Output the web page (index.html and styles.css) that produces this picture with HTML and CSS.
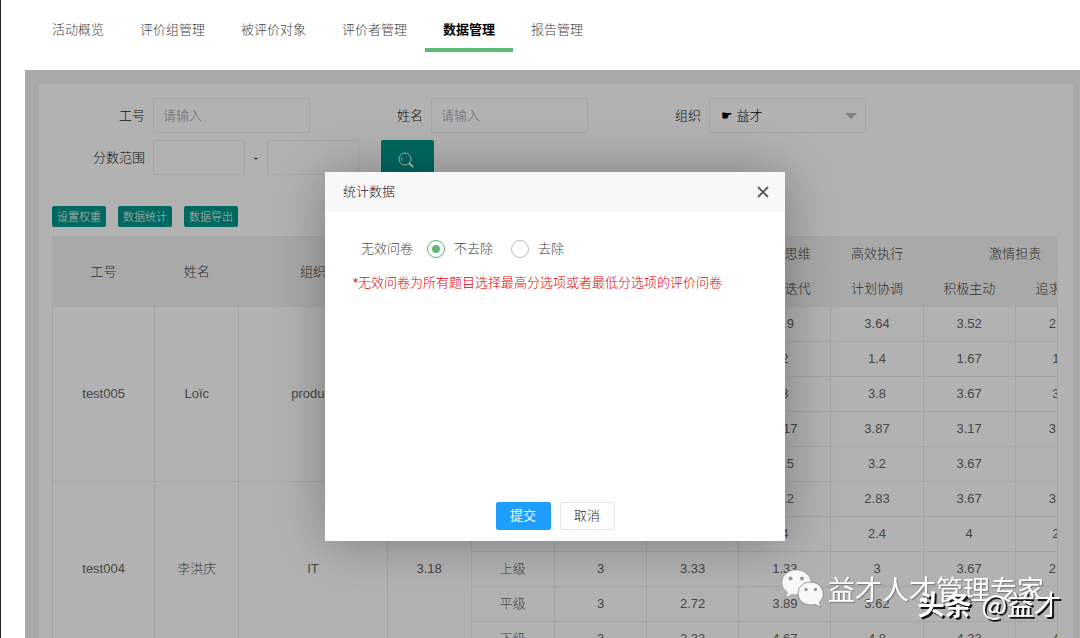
FILE: index.html
```html
<!DOCTYPE html>
<html lang="zh-CN">
<head>
<meta charset="utf-8">
<title>数据管理</title>
<link rel="stylesheet" href="styles.css">
</head>
<body>
<nav class="tabs">
  <a class="tab" href="#">活动概览</a>
  <a class="tab" href="#">评价组管理</a>
  <a class="tab" href="#">被评价对象</a>
  <a class="tab" href="#">评价者管理</a>
  <a class="tab tab-active" href="#">数据管理</a>
  <a class="tab" href="#">报告管理</a>
</nav>

<main class="stage">
  <section class="panel">
    <form class="filters">
      <div class="filter-row">
        <div class="field"><label class="field-label" for="job">工号</label><input class="box box-wide" id="job" type="text" placeholder="请输入"></div>
        <div class="field"><label class="field-label" for="name">姓名</label><input class="box box-wide" id="name" type="text" placeholder="请输入"></div>
        <div class="field"><label class="field-label" for="org">组织</label>
          <div class="select-wrap"><select class="box box-wide select" id="org"><option>☛ 益才</option></select></div>
        </div>
      </div>
      <div class="filter-row">
        <div class="field field-range">
          <label class="field-label" for="min">分数范围</label>
          <input class="box box-short" id="min" type="text">
          <span class="dash">-</span>
          <input class="box box-short" type="text" aria-label="最高分">
        </div>
        <button class="search" type="button" aria-label="搜索">
          <svg width="18" height="18" viewBox="0 0 18 18" fill="none" stroke="currentColor"><circle cx="8" cy="8" r="6"/><path d="M5 10a3.5 3.5 0 0 1 0-4" stroke-width="0.8"/><path d="M12.5 12.5l3 3" stroke-width="2" stroke-linecap="round"/></svg>
        </button>
      </div>
    </form>

    <div class="actions">
      <button class="action" type="button">设置权重</button>
      <button class="action" type="button">数据统计</button>
      <button class="action" type="button">数据导出</button>
    </div>

    <div class="table-wrap">
      <table class="grid">
        <colgroup>
          <col class="c-id"><col class="c-s"><col class="c-org"><col class="c-s"><col class="c-rel">
          <col class="c-m"><col class="c-m"><col class="c-m"><col class="c-m"><col class="c-m"><col class="c-m">
        </colgroup>
        <thead>
          <tr><th rowspan="2">工号</th><th rowspan="2">姓名</th><th rowspan="2">组织</th><th rowspan="2"></th><th rowspan="2"></th><th rowspan="2"></th><th></th><th>创新思维</th><th>高效执行</th><th colspan="2">激情担责</th></tr>
          <tr><th></th><th>快速迭代</th><th>计划协调</th><th>积极主动</th><th>追求卓越</th></tr>
        </thead>
        <tbody>
          <tr><td rowspan="5">test005</td><td rowspan="5">Loïc</td><td rowspan="5">product</td><td rowspan="5"></td><td></td><td></td><td></td><td>3.9</td><td>3.64</td><td>3.52</td><td>2.88</td></tr>
          <tr><td></td><td></td><td></td><td>2</td><td>1.4</td><td>1.67</td><td>1.5</td></tr>
          <tr><td></td><td></td><td></td><td>3</td><td>3.8</td><td>3.67</td><td>3.5</td></tr>
          <tr><td></td><td></td><td></td><td>3.17</td><td>3.87</td><td>3.17</td><td>3.33</td></tr>
          <tr><td></td><td></td><td></td><td>3.5</td><td>3.2</td><td>3.67</td><td></td></tr>
          <tr><td rowspan="5">test004</td><td rowspan="5">李洪庆</td><td rowspan="5">IT</td><td rowspan="5">3.18</td><td></td><td></td><td></td><td>3.2</td><td>2.83</td><td>3.67</td><td>3.25</td></tr>
          <tr><td></td><td></td><td></td><td>4</td><td>2.4</td><td>4</td><td>2.5</td></tr>
          <tr><td>上级</td><td>3</td><td>3.33</td><td>1.33</td><td>3</td><td>3.67</td><td>2.33</td></tr>
          <tr><td>平级</td><td>3</td><td>2.72</td><td>3.89</td><td>3.62</td><td>3</td><td></td></tr>
          <tr><td>下级</td><td>3</td><td>2.33</td><td>4.67</td><td>4.8</td><td>4.33</td><td>4.5</td></tr>
        </tbody>
      </table>
    </div>
  </section>

  <div class="shade">
    <div class="dialog" role="dialog" aria-labelledby="dlg-title">
      <header class="dialog-head">
        <h2 class="dialog-title" id="dlg-title">统计数据</h2>
        <button class="close" type="button" aria-label="关闭">
          <svg width="12" height="12" viewBox="0 0 12 12" fill="none" stroke="currentColor" stroke-width="1.8"><path d="M1 1l10 10M11 1L1 11"/></svg>
        </button>
      </header>
      <form class="dialog-body">
        <div class="choices">
          <span class="choice-name">无效问卷</span>
          <label class="choice"><input class="radio" type="radio" name="invalid" checked>不去除</label>
          <label class="choice"><input class="radio" type="radio" name="invalid">去除</label>
        </div>
        <p class="note">*无效问卷为所有题目选择最高分选项或者最低分选项的评价问卷</p>
      </form>
      <footer class="dialog-foot">
        <button class="btn btn-main" type="button">提交</button>
        <button class="btn" type="button">取消</button>
      </footer>
    </div>
  </div>
</main>

<div class="mark mark-account">
  <svg class="chat" width="43" height="40" viewBox="0 0 43 40">
    <path d="M15 1C7 1 1 6.500 1 13.500c0 4 2 7.500 5.500 9.800L5 28.500l6-3.200c1.500.4 3 .5 5 .5 8 0 14-5 14-12C30 6.500 23 1 15 1z" fill="#f8f8f8" stroke="#999" stroke-width="0.6"/>
    <path d="M29.500 13C22 13 17 18 17 24.500S22.500 36 29.500 36c1.600 0 3-.2 4.500-.7l6 3.200-1.500-5.200c2.400-2.200 3.800-5 3.800-8.300C42.300 18.300 36.500 13 29.500 13z" fill="#f8f8f8" stroke="#888" stroke-width="0.9"/>
    <g fill="#999"><circle cx="9.500" cy="9.500" r="2"/><circle cx="21" cy="9.500" r="2"/><circle cx="25" cy="20.500" r="1.700"/><circle cx="34.500" cy="20.500" r="1.700"/></g>
  </svg>
  <span>益才人才管理专家</span>
</div>
<div class="mark mark-source"><b>头条</b><span>@益才</span></div>
</body>
</html>
```
FILE: styles.css
```css
* { box-sizing: border-box; }

body {
  margin: 0;
  height: 100vh;
  display: flex;
  flex-direction: column;
  overflow: hidden;
  border-left: 1px solid #222;
  background: #fff;
  color: #222;
  font: 300 13px/20px "Liberation Sans", "Noto Sans CJK SC", sans-serif;
}

button, input, select { font: inherit; color: inherit; }

.tabs {
  display: flex;
  height: 70px;
  padding-left: 33px;
  flex: none;
}

.tab {
  height: 52px;
  padding: 20px 18px 0;
  border-bottom: 4px solid transparent;
  color: #444;
  text-decoration: none;
}

.tab-active {
  border-color: #5fb878;
  color: #000;
  font-weight: 700;
}

.stage {
  position: relative;
  flex: 1;
  min-height: 0;
  margin-left: 24px;
  padding: 14px 7px 0 14px;
  overflow: hidden;
  background: #f2f2f2;
}

.panel {
  padding: 14px 15px 0 13px;
  background: #fff;
}

.filters {
  display: flex;
  flex-direction: column;
  gap: 7px;
  margin-left: -13px;
}

.filter-row { display: flex; }

.field {
  display: flex;
  align-items: center;
  width: 278px;
}

.field-range { width: 320px; }

.field-label {
  flex: none;
  width: 106px;
  margin-right: 8px;
  text-align: right;
}

.box {
  height: 35px;
  padding: 0 9px;
  border: 1px solid #f0f0f0;
  border-radius: 2px;
  background: #fff;
}

.box::placeholder { color: #999; }
.box-wide { width: 157px; }
.box-short { width: 92px; flex: none; }
.dash { width: 22px; flex: none; text-align: center; }

.select-wrap { position: relative; }

.select {
  appearance: none;
  padding-left: 11px;
  color: #000;
}

.select-wrap::after {
  content: "";
  position: absolute;
  top: 15px;
  right: 9px;
  border: 6px solid transparent;
  border-top-color: #b8b8b8;
  border-bottom: 0;
}

.search {
  display: grid;
  place-items: center;
  width: 53px;
  height: 35px;
  margin-left: 22px;
  padding: 4px 3px 0 0;
  border: 0;
  border-radius: 2px;
  background: #009688;
  color: #fff;
}

.actions {
  display: flex;
  gap: 12px;
  margin: 31px 0 9px;
}

.action {
  width: 54px;
  height: 21px;
  padding: 0;
  border: 0;
  border-radius: 2px;
  background: #009688;
  color: #fff;
  font-size: 11px;
  line-height: 20px;
}

.table-wrap {
  overflow: hidden;
  border-right: 1px solid #ececec;
}

.grid {
  width: 1056px;
  table-layout: fixed;
  border-collapse: collapse;
  color: #666;
  text-align: center;
}

.c-id { width: 102px; }
.c-s { width: 84px; }
.c-org { width: 148px; }
.c-rel { width: 83px; }
.c-m { width: 92px; }

.grid th, .grid td {
  height: 35px;
  padding: 0;
  border: 1px solid #ececec;
  font-weight: inherit;
  white-space: nowrap;
}

.grid th {
  border-color: #f0f0f0;
  background: #f2f2f2;
  color: #444;
}

.shade {
  position: absolute;
  inset: 0;
  background: rgba(0, 0, 0, .3);
}

.dialog {
  position: absolute;
  top: 102px;
  left: 300px;
  display: flex;
  flex-direction: column;
  width: 460px;
  min-height: 369px;
  background: #fff;
  box-shadow: 1px 1px 50px rgba(0, 0, 0, .3);
}

.dialog-head {
  display: flex;
  align-items: center;
  justify-content: space-between;
  height: 40px;
  padding: 0 16px 0 18px;
  background: #f8f8f8;
}

.dialog-title {
  margin: 0;
  font-size: 13px;
  font-weight: inherit;
}

.close {
  display: flex;
  padding: 0;
  border: 0;
  background: none;
  color: #555;
}

.dialog-body {
  flex: 1;
  padding: 27px 28px;
  color: #444;
}

.choices {
  display: flex;
  align-items: center;
  gap: 18px;
  padding-left: 8px;
}

.choice {
  display: flex;
  align-items: center;
  gap: 9px;
}

.choice-name { margin-right: -4px; }

.radio {
  appearance: none;
  display: grid;
  place-items: center;
  width: 18px;
  height: 18px;
  margin: 0;
  border: 1px solid #bbb;
  border-radius: 50%;
}

.radio:checked { border-color: #5fb878; }

.radio:checked::before {
  content: "";
  width: 8px;
  height: 8px;
  border-radius: 50%;
  background: #5fb878;
}

.note {
  margin: 14px 0 0;
  color: #e00000;
  white-space: nowrap;
}

.dialog-foot {
  display: flex;
  justify-content: center;
  gap: 9px;
  padding-bottom: 11px;
}

.btn {
  width: 55px;
  height: 28px;
  padding: 0;
  border: 1px solid #e6e6e6;
  border-radius: 2px;
  background: #fff;
}

.btn-main {
  border-color: #1e9fff;
  background: #1e9fff;
  color: #fff;
  font-weight: 400;
}

.mark {
  position: fixed;
  display: flex;
  color: #fff;
  font-family: "Noto Sans CJK SC", sans-serif;
  font-size: 27px;
  font-weight: 400;
  line-height: 40px;
  white-space: nowrap;
}

.mark-account {
  right: 36px;
  bottom: 29px;
  align-items: center;
  gap: 4px;
  text-shadow: 1px 1px 1px #777;
}

.mark-source {
  right: 19px;
  bottom: 14px;
  gap: 10px;
  text-shadow: 2px 2px 0 #111;
}
```
